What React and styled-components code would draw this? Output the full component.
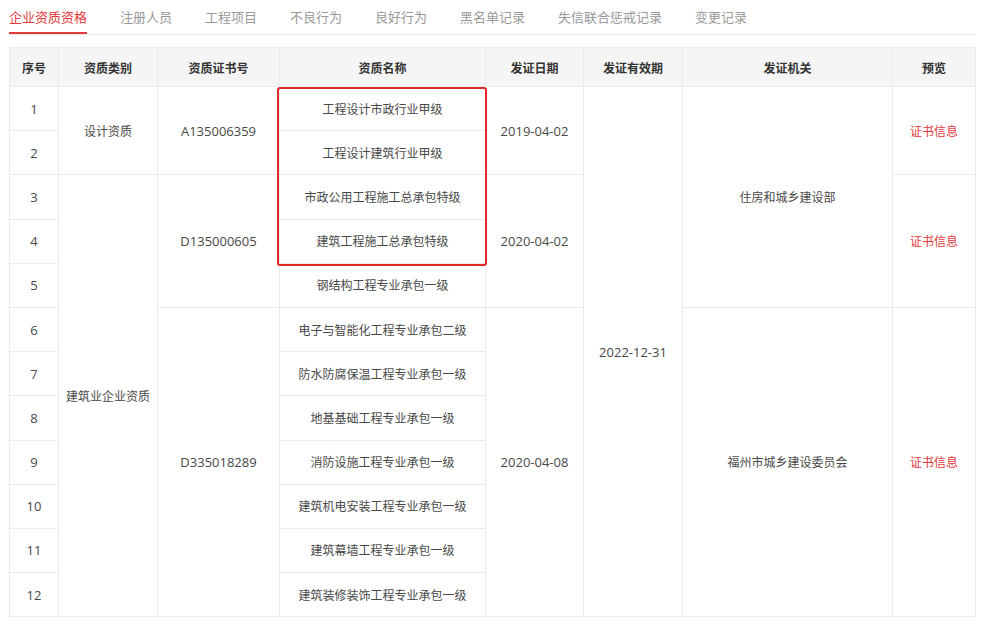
import React from 'react'
import styled, { createGlobalStyle } from 'styled-components'

const COLORS = {
  red: '#e4393c',
  mark: '#e02a2a',
  line: '#ebebeb',
  text: '#484848',
  head: '#333',
  muted: '#999'
}

const Global = createGlobalStyle`
  body {
    margin: 0;
    background: #fff;
    font-family: "Open Sans", "Noto Sans CJK SC", sans-serif;
  }
`

const Page = styled.div`
  width: 966px;
  padding-left: 9px;
`

const Tabs = styled.div`
  display: flex;
  gap: 33px;
  height: 35px;
  border-bottom: 1px solid ${COLORS.line};
  box-sizing: border-box;
`

const Tab = styled.div`
  font-family: "Noto Sans CJK SC", sans-serif;
  font-size: 13px;
  line-height: 33px;
  color: ${p => (p.$active ? COLORS.red : COLORS.muted)};
  border-bottom: 2px solid ${p => (p.$active ? COLORS.red : 'transparent')};
`

const TableWrap = styled.div`
  position: relative;
  margin-top: 12px;
  box-shadow: 0 1px 2px rgba(0, 0, 0, 0.04);
`

const Table = styled.table`
  width: 966px;
  border-collapse: collapse;
  table-layout: fixed;
  border: 1px solid ${COLORS.line};
`

const Th = styled.th`
  height: 38px;
  padding: 0;
  background: #f5f5f5;
  border: 1px solid ${COLORS.line};
  font-family: "Noto Sans CJK SC", sans-serif;
  font-size: 12px;
  font-weight: bold;
  color: ${COLORS.head};
  text-align: center;
`

const Row = styled.tr`
  height: 44.2px;
`

const Td = styled.td`
  padding: 0;
  border: 1px solid ${COLORS.line};
  font-size: ${p => (p.$num ? '13px' : '12px')};
  color: ${p => (p.$link ? COLORS.red : COLORS.text)};
  text-align: center;
  vertical-align: middle;
`

const Mark = styled.div`
  position: absolute;
  left: 268px;
  top: 40px;
  width: 210px;
  height: 179px;
  border: 2px solid ${COLORS.mark};
  border-radius: 3px;
  box-sizing: border-box;
  pointer-events: none;
`

const tabs = ['企业资质资格', '注册人员', '工程项目', '不良行为', '良好行为', '黑名单记录', '失信联合惩戒记录', '变更记录']

const cols = [
  ['序号', 49], ['资质类别', 99], ['资质证书号', 122], ['资质名称', 206],
  ['发证日期', 98], ['发证有效期', 99], ['发证机关', 210], ['预览', 83]
]

const names = [
  '工程设计市政行业甲级', '工程设计建筑行业甲级', '市政公用工程施工总承包特级',
  '建筑工程施工总承包特级', '钢结构工程专业承包一级', '电子与智能化工程专业承包二级',
  '防水防腐保温工程专业承包一级', '地基基础工程专业承包一级', '消防设施工程专业承包一级',
  '建筑机电安装工程专业承包一级', '建筑幕墙工程专业承包一级', '建筑装修装饰工程专业承包一级'
]

// merged cells, keyed by the row index where they start
const spans = {
  0: [
    { col: 1, rows: 2, text: '设计资质' },
    { col: 2, rows: 2, text: 'A135006359', num: true },
    { col: 4, rows: 2, text: '2019-04-02', num: true },
    { col: 5, rows: 12, text: '2022-12-31', num: true },
    { col: 6, rows: 5, text: '住房和城乡建设部' },
    { col: 7, rows: 2, text: '证书信息', link: true }
  ],
  2: [
    { col: 1, rows: 10, text: '建筑业企业资质' },
    { col: 2, rows: 3, text: 'D135000605', num: true },
    { col: 4, rows: 3, text: '2020-04-02', num: true },
    { col: 7, rows: 3, text: '证书信息', link: true }
  ],
  5: [
    { col: 2, rows: 7, text: 'D335018289', num: true },
    { col: 4, rows: 7, text: '2020-04-08', num: true },
    { col: 6, rows: 7, text: '福州市城乡建设委员会' },
    { col: 7, rows: 7, text: '证书信息', link: true }
  ]
}

function renderRow (name, i) {
  const cells = [
    <Td key='n' $num>{i + 1}</Td>
  ]
  const byCol = {}
  ;(spans[i] || []).forEach(m => { byCol[m.col] = m })
  for (let c = 1; c < 8; c++) {
    if (c === 3) {
      cells.push(<Td key='name'>{name}</Td>)
    } else if (byCol[c]) {
      const m = byCol[c]
      cells.push(
        <Td key={c} rowSpan={m.rows} $num={m.num} $link={m.link}>{m.text}</Td>
      )
    }
  }
  return <Row key={i}>{cells}</Row>
}

export default function App () {
  return (
    <Page>
      <Global />
      <Tabs>
        {tabs.map((t, i) => <Tab key={t} $active={i === 0}>{t}</Tab>)}
      </Tabs>
      <TableWrap>
        <Table>
          <colgroup>
            {cols.map(([t, w]) => <col key={t} style={{ width: w }} />)}
          </colgroup>
          <thead>
            <tr>{cols.map(([t]) => <Th key={t}>{t}</Th>)}</tr>
          </thead>
          <tbody>
            {names.map(renderRow)}
          </tbody>
        </Table>
        <Mark />
      </TableWrap>
    </Page>
  )
}
